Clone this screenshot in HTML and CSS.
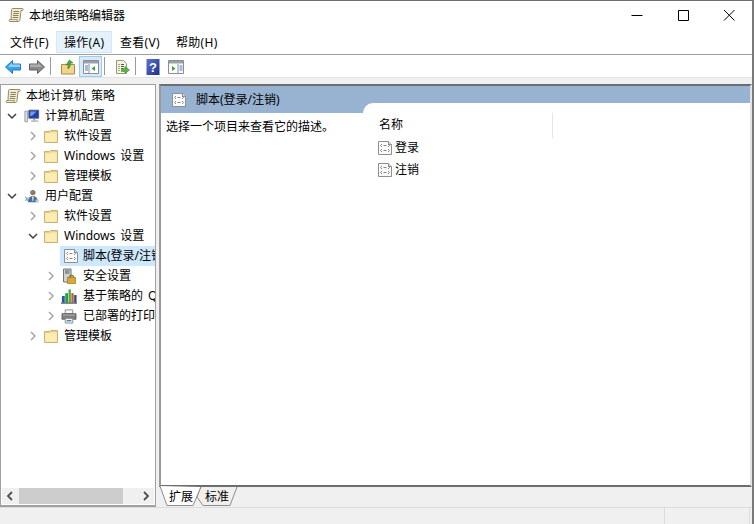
FILE: index.html
```html
<!DOCTYPE html>
<html lang="zh-CN">
<head>
<meta charset="utf-8">
<title>本地组策略编辑器</title>
<link rel="stylesheet" href="styles.css">
</head>
<body>
<svg class="defs" width="0" height="0" aria-hidden="true">
  <defs>
    <linearGradient id="help-fill" x1="0" y1="0" x2="1" y2="1">
      <stop offset="0" stop-color="#5b74cc"/>
      <stop offset="1" stop-color="#1f2f8c"/>
    </linearGradient>
    <symbol id="scroll" viewBox="0 0 16 16">
      <path d="M4.500 1.500H14.500C15.300 1.500 15.500 2.800 14.500 3.500H13L12 12.500C11.800 14 11 14.500 10 14.500H2C.8 14.500.8 12.800 2 12.500H3L3.500 3C3.500 2.200 4 1.500 4.500 1.500z" fill="#f4ebc8" stroke="#85805f" stroke-width=".9"/>
      <path d="M5.500 4.500h5.500M5.300 6.500h5.500M5 8.500h5.500M4.800 10.500h5.500" stroke="#7a745c" stroke-width=".9"/>
      <path d="M3 12.500h6.500c-.6.600-.6 1.400 0 2" fill="none" stroke="#85805f" stroke-width=".7"/>
    </symbol>
    <symbol id="folder" viewBox="0 0 16 16">
      <path d="M1.500 3.500V14.500H14.500V2.500H7.500L6.500 3.500z" fill="#f9e49b" stroke="#c9b27a"/>
      <path d="M2.500 5.500H13.500V13.500H2.500z" fill="#fcedb4"/>
      <path d="M2 4.500H7l1-1h6" fill="none" stroke="#e3cf8f"/>
    </symbol>
    <symbol id="script" viewBox="0 0 16 16">
      <path d="M1.500 1.500H11.500L14.500 4.500V14.500H1.500z" fill="#fbfbfb" stroke="#8f8f8f"/>
      <path d="M11.500 1.500V4.500H14.500" fill="#e4e4e4" stroke="#8f8f8f"/>
      <path d="M5 4L3.500 5.500 5 7M6.500 5.500h3M11 4l1.500 1.500L11 7M5 9L3.500 10.500 5 12M6.500 10.500h3M11 9l1.500 1.500L11 12" fill="none" stroke="#777" stroke-width=".9"/>
    </symbol>
    <symbol id="computer" viewBox="0 0 18 16">
      <path d="M1 2.500h3v12H1z" fill="#d9dde3" stroke="#7c8490" stroke-width=".8"/>
      <path d="M5.500 1.500h11v9h-11z" fill="#1f3fb0" stroke="#53596a"/>
      <path d="M7 3h7L9 8H7z" fill="#6f9bea"/>
      <path d="M8 13h8v1.500H8z" fill="#a9afb8"/>
      <path d="M10.500 10.500h2V13h-2z" fill="#8c93a0"/>
    </symbol>
    <symbol id="user" viewBox="0 0 18 16">
      <circle cx="10" cy="4.200" r="3" fill="#8b7a64"/>
      <path d="M4.500 15c0-4.500 2-7 5.500-7s5.500 2.500 5.500 7z" fill="#4c6f97"/>
      <path d="M9 8.500h2l-.5 5h-1z" fill="#d9e4ee"/>
      <path d="M1.500 8.500l3 5M1.500 13.500c1-2 2-3 3.500-4" stroke="#8aa3bb" stroke-width="1.200" fill="none"/>
      <path d="M13 12h3.500v3H13z" fill="#b8c8d6"/>
    </symbol>
    <symbol id="lock" viewBox="0 0 16 16">
      <path d="M2.500 1h7.500v13H2.500z" fill="#cfd3d6" stroke="#6d7378"/>
      <path d="M4 3h4.500M4 5h4.500" stroke="#4e5458"/>
      <path d="M8.300 9.500a2.200 2.200 0 0 1 4.400 0" fill="none" stroke="#8a6d1c" stroke-width="1.200"/>
      <path d="M6.500 9.500h8v6h-8z" fill="#d9aa2f" stroke="#96741a" stroke-width=".7"/>
    </symbol>
    <symbol id="chart" viewBox="0 0 17 16">
      <path d="M1 8h3v7H1z" fill="#2456b8"/>
      <path d="M4.500 5h3v10h-3z" fill="#2f9c3c"/>
      <path d="M8 1h2.500v14H8z" fill="#40b04a"/>
      <path d="M11 5h2.500v10H11z" fill="#d9541e"/>
      <path d="M14 7h2.500v8H14z" fill="#1f4aa8"/>
      <path d="M0 15h17v1H0z" fill="#222"/>
    </symbol>
    <symbol id="printer" viewBox="0 0 17 16">
      <path d="M4.500 1.500h8v4h-8z" fill="#fafafa" stroke="#8a8a8a"/>
      <path d="M1 5.500h15v6H1z" fill="#7d7f82" stroke="#55585c" stroke-width=".8"/>
      <path d="M2 7h13" stroke="#b5b7ba"/>
      <path d="M4.500 10.500h8v5h-8z" fill="#f2f6f8" stroke="#8a8a8a"/>
      <path d="M6 13h5" stroke="#3f87b5" stroke-width="1.500"/>
    </symbol>
    <symbol id="window-left" viewBox="0 0 16 16">
      <path d="M.5 1.500h15v13H.5z" fill="#fff" stroke="#8a8f96"/>
      <path d="M1 2h14v2.500H1z" fill="#9aa0a8"/>
      <path d="M6 5v9" stroke="#8a8f96"/>
      <path d="M2 7h3M2 9h3M2 11h3" stroke="#3f7fc1" stroke-width="1.200"/>
      <path d="M12 7v5L8.500 9.500z" fill="#3ca03c"/>
    </symbol>
    <symbol id="window-right" viewBox="0 0 16 16">
      <path d="M.5 1.500h15v13H.5z" fill="#fff" stroke="#8a8f96"/>
      <path d="M1 2h14v2.500H1z" fill="#9aa0a8"/>
      <path d="M10 5v9" stroke="#8a8f96"/>
      <path d="M11.500 7h3M11.500 9h3M11.500 11h3" stroke="#3f7fc1" stroke-width="1.200"/>
      <path d="M4 7v5L7.500 9.500z" fill="#3ca03c"/>
    </symbol>
  </defs>
</svg>

<div class="window">
  <header class="titlebar">
    <svg class="icon title-icon"><use href="#scroll"/></svg>
    <span class="title">本地组策略编辑器</span>
    <div class="controls">
      <svg class="control" viewBox="0 0 46 28"><path d="M17.500 14.500H28.500" stroke="#000"/></svg>
      <svg class="control" viewBox="0 0 46 28"><path d="M18.500 9.500h10v10h-10z" fill="none" stroke="#000"/></svg>
      <svg class="control" viewBox="0 0 46 28"><path d="M18 9l10.500 10.500M28.500 9L18 19.500" stroke="#000"/></svg>
    </div>
  </header>

  <nav class="menubar">
    <span class="menu menu-first">文件(F)</span>
    <span class="menu menu-active">操作(A)</span>
    <span class="menu">查看(V)</span>
    <span class="menu">帮助(H)</span>
  </nav>

  <div class="toolbar">
    <span class="tool tool-arrow">
      <svg class="tool-icon" viewBox="0 0 16 16"><path d="M.5 8L7.500 1.500V5H15.500V11H7.500V14.500z" fill="#36a5ec" stroke="#2b77b5"/><path d="M7 3.500V5.500H15V8H3z" fill="#8fd3fa"/></svg>
    </span>
    <span class="tool">
      <svg class="tool-icon" viewBox="0 0 16 16"><path d="M15.500 8L8.500 1.500V5H.5V11H8.500V14.500z" fill="#8a8a8a" stroke="#606060"/><path d="M1 5.500H9V3.500L13 8H1z" fill="#adadad"/></svg>
    </span>
    <span class="sep"></span>
    <span class="tool">
      <svg class="tool-icon" viewBox="0 0 16 16"><path d="M1.500 5.500V15H14.500V5.500H8z" fill="#f3d488" stroke="#a98c4e"/><path d="M8 10V5.500L6 6l3.500-5L13 4l-2-.3c-.5 2.800-1.500 5-3 6.300z" fill="#4caf3b" stroke="#2e7d25" stroke-width=".6"/></svg>
    </span>
    <span class="tool tool-on">
      <svg class="tool-icon"><use href="#window-left"/></svg>
    </span>
    <span class="sep"></span>
    <span class="tool">
      <svg class="tool-icon" viewBox="0 0 16 16"><path d="M2.500 1.500H9.500L12.500 4.500V14.500H2.500z" fill="#f7f3dc" stroke="#9a967f"/><path d="M4.500 5.500h1M7 5.500h3M4.500 7.500h1M7 7.500h3M4.500 9.500h1M7 9.500h2M4.500 11.500h1" stroke="#555"/><path d="M7.500 9.500h3.500V7.500l4.500 3.500-4.500 3.500v-2H7.500z" fill="#52b848" stroke="#3a8a30" stroke-width=".6"/></svg>
    </span>
    <span class="sep"></span>
    <span class="tool tool-help">
      <svg class="tool-icon" viewBox="0 0 16 16"><path d="M1.500 0h13v16h-13z" fill="url(#help-fill)"/><text class="help-mark" x="8" y="13">?</text></svg>
    </span>
    <span class="tool">
      <svg class="tool-icon"><use href="#window-right"/></svg>
    </span>
  </div>

  <main class="workspace">
    <aside class="tree-pane">
      <ul class="tree">
        <li class="row root"><span class="twist"></span><svg class="icon node-icon"><use href="#scroll"/></svg><span class="label">本地计算机 策略</span></li>
        <li class="row l1"><svg class="twist" viewBox="0 0 10 10"><path d="M1 3l4 4 4-4" class="open"/></svg><svg class="icon node-icon"><use href="#computer"/></svg><span class="label">计算机配置</span></li>
        <li class="row l2"><svg class="twist" viewBox="0 0 10 10"><path d="M3 1l4 4-4 4" class="closed"/></svg><svg class="icon node-icon"><use href="#folder"/></svg><span class="label">软件设置</span></li>
        <li class="row l2"><svg class="twist" viewBox="0 0 10 10"><path d="M3 1l4 4-4 4" class="closed"/></svg><svg class="icon node-icon"><use href="#folder"/></svg><span class="label">Windows 设置</span></li>
        <li class="row l2"><svg class="twist" viewBox="0 0 10 10"><path d="M3 1l4 4-4 4" class="closed"/></svg><svg class="icon node-icon"><use href="#folder"/></svg><span class="label">管理模板</span></li>
        <li class="row l1"><svg class="twist" viewBox="0 0 10 10"><path d="M1 3l4 4 4-4" class="open"/></svg><svg class="icon node-icon"><use href="#user"/></svg><span class="label">用户配置</span></li>
        <li class="row l2"><svg class="twist" viewBox="0 0 10 10"><path d="M3 1l4 4-4 4" class="closed"/></svg><svg class="icon node-icon"><use href="#folder"/></svg><span class="label">软件设置</span></li>
        <li class="row l2"><svg class="twist" viewBox="0 0 10 10"><path d="M1 3l4 4 4-4" class="open"/></svg><svg class="icon node-icon"><use href="#folder"/></svg><span class="label">Windows 设置</span></li>
        <li class="row l3 selected"><span class="twist"></span><svg class="icon node-icon"><use href="#script"/></svg><span class="label">脚本(登录/注销)</span></li>
        <li class="row l3"><svg class="twist" viewBox="0 0 10 10"><path d="M3 1l4 4-4 4" class="closed"/></svg><svg class="icon node-icon"><use href="#lock"/></svg><span class="label">安全设置</span></li>
        <li class="row l3"><svg class="twist" viewBox="0 0 10 10"><path d="M3 1l4 4-4 4" class="closed"/></svg><svg class="icon node-icon"><use href="#chart"/></svg><span class="label">基于策略的 QoS</span></li>
        <li class="row l3"><svg class="twist" viewBox="0 0 10 10"><path d="M3 1l4 4-4 4" class="closed"/></svg><svg class="icon node-icon"><use href="#printer"/></svg><span class="label">已部署的打印机</span></li>
        <li class="row l2"><svg class="twist" viewBox="0 0 10 10"><path d="M3 1l4 4-4 4" class="closed"/></svg><svg class="icon node-icon"><use href="#folder"/></svg><span class="label">管理模板</span></li>
      </ul>
      <div class="hscroll">
        <svg class="arrow" viewBox="0 0 17 16"><path d="M10 4L6 8l4 4"/></svg>
        <div class="track"><div class="thumb"></div></div>
        <svg class="arrow" viewBox="0 0 17 16"><path d="M7 4l4 4-4 4"/></svg>
      </div>
    </aside>

    <section class="content">
      <div class="detail-pane">
        <div class="banner">
          <svg class="icon banner-icon"><use href="#script"/></svg>
          <span class="label">脚本(登录/注销)</span>
        </div>
        <div class="detail-body">
          <p class="description">选择一个项目来查看它的描述。</p>
          <div class="list">
            <div class="list-head"><span class="col-name">名称</span></div>
            <div class="list-row"><svg class="icon item-icon"><use href="#script"/></svg><span class="label">登录</span></div>
            <div class="list-row"><svg class="icon item-icon"><use href="#script"/></svg><span class="label">注销</span></div>
          </div>
        </div>
      </div>
      <div class="tabs">
        <svg class="tabs-svg" viewBox="0 0 84 20" width="84" height="20">
          <path d="M1 -1L8 18.500H34L42 0" fill="#fff" stroke="#8c8c8c"/>
          <path d="M42 0L38 10L44 18.500H71L78 0" fill="#f0f0f0" stroke="#8c8c8c"/>
          <text class="tab-label" x="10" y="14">扩展</text>
          <text class="tab-label" x="46" y="14">标准</text>
        </svg>
      </div>
    </section>
  </main>

  <footer class="statusbar">
    <span class="status-cell status-main"></span>
    <span class="status-cell status-side"></span>
    <span class="status-cell status-end"></span>
  </footer>
</div>
</body>
</html>
```
FILE: styles.css
```css
* { box-sizing: border-box; }
html, body { margin: 0; padding: 0; height: 100%; overflow: hidden; }
body {
  font-family: "Noto Sans", "Noto Sans CJK SC", sans-serif;
  font-size: 12px;
  color: #000;
  background: #fff;
}
.defs { display: block; width: 0; height: 0; overflow: hidden; }
.icon { display: block; flex: none; width: 16px; height: 16px; }
.label { display: block; padding-bottom: 2px; }

.window {
  display: flex;
  flex-direction: column;
  width: 754px;
  height: 524px;
  border-top: 1px solid #6d6d6d;
  border-right: 2px solid #7a7a7a;
  background: #fff;
}

.titlebar { display: flex; align-items: center; height: 28px; flex: none; padding-left: 8px; }
.title { margin-left: 5px; line-height: 30px; height: 28px; flex: 1; }
.controls { display: flex; }
.control { display: block; width: 46px; height: 28px; }

.menubar {
  display: flex;
  height: 26px;
  flex: none;
  padding: 2px 0 0 1px;
  border-bottom: 1px solid #a0a0a0;
}
.menu { display: block; width: 56px; height: 22px; line-height: 22px; padding-left: 7px; border: 1px solid transparent; letter-spacing: .3px; white-space: nowrap; }
.menu-first { padding-left: 8px; width: 55px; }
.menu-active { background: #e6f2fb; border-color: #d3e9fa; }

.toolbar { display: flex; align-items: center; height: 22px; flex: none; padding-left: 1px; }
.tool { display: flex; align-items: center; justify-content: center; width: 23px; height: 21px; padding-top: 1px; border: 1px solid transparent; }
.tool-arrow { width: 24px; }
.tool-on { background: #d6eafa; border-color: #9fcdf0; }
.tool-icon { display: block; width: 16px; height: 16px; }
.sep { width: 1px; height: 18px; margin: 0 5px 0 2px; background: #9a9a9a; }
.help-mark { font: bold 13px "Liberation Sans", sans-serif; fill: #fff; text-anchor: middle; }

.workspace {
  display: flex;
  flex: 1;
  min-height: 0;
  padding-top: 6px;
  background: #f0f0f0;
  border-top: 1px solid #e3e3e3;
  column-gap: 3px;
}

.tree-pane {
  display: flex;
  flex-direction: column;
  width: 156px;
  flex: none;
  background: #fff;
  border: 1px solid #a0a0a0;
  border-bottom-width: 2px;
  overflow: hidden;
}
.tree { list-style: none; margin: 0; padding: 1px 0 0 1px; flex: 1; min-height: 0; overflow: hidden; }
.row { display: flex; align-items: center; height: 20px; white-space: nowrap; overflow: hidden; }
.row .label { margin-left: 5px; word-spacing: 2px; }
.row .twist { display: block; flex: none; width: 10px; height: 10px; }
.row > span.twist { width: 3px; margin: 0; }
.l1 { padding-left: 5px; }
.l1 .node-icon { margin-left: 7px; }
.l2 { padding-left: 26px; }
.l2 .node-icon { margin-left: 5px; }
.l3 { padding-left: 44px; }
.l3 .node-icon { margin-left: 5px; }
.l3 .label { margin-left: 6px; }
.selected { background: #cde8ff; margin-left: 58px; padding-left: 0; }
.selected > span.twist { display: none; }
.selected .node-icon { margin-left: 3px; }
.selected .label { margin-left: 4px; }
.open, .closed { fill: none; stroke-width: 1.500; }
.open { stroke: #404040; }
.closed { stroke: #a6a6a6; }

.hscroll { display: flex; align-items: center; height: 16px; flex: none; background: #f0f0f0; margin: 0 1px 1px 1px; }
.arrow { display: block; flex: none; width: 17px; height: 16px; }
.arrow path { fill: none; stroke: #505050; stroke-width: 1.800; }
.track { flex: 1; height: 100%; }
.thumb { width: 104px; height: 100%; background: #cdcdcd; }

.content { display: flex; flex-direction: column; flex: 1; min-width: 0; }
.detail-pane {
  display: flex;
  flex-direction: column;
  flex: 1;
  min-height: 0;
  background: #fff;
  border-top: 2px solid #6d6d6d;
  border-left: 2px solid #9a9a9a;
  border-bottom: 2px solid #6d6d6d;
  border-right: 2px solid #e3e3e3;
}
.banner {
  display: flex;
  align-items: center;
  height: 27px;
  flex: none;
  padding-left: 10px;
  background: #98b3d1;
  column-gap: 9px;
}
.detail-body { display: flex; flex: 1; min-height: 0; }
.description { margin: 0; width: 202px; flex: none; padding: 5px 0 0 5px; line-height: 17px; }
.list {
  position: relative;
  flex: 1;
  margin-top: -10px;
  background: #fff;
  border-top-left-radius: 10px;
  padding-top: 10px;
}
.list-head { display: flex; align-items: center; height: 25px; margin-bottom: -1px; padding-left: 16px; }
.col-name { display: block; width: 174px; height: 25px; line-height: 23px; border-right: 1px solid #e5e5e5; }
.list-row { display: flex; align-items: center; height: 22px; padding-left: 14px; column-gap: 2px; }

.tabs { height: 20px; flex: none; }
.tabs-svg { display: block; overflow: visible; }
.tab-label { font-size: 12px; fill: #000; font-family: "Noto Sans CJK SC", sans-serif; }

.statusbar { display: flex; height: 17px; flex: none; background: #f0f0f0; border-top: 1px solid #dcdcdc; }
.status-cell { display: block; height: 100%; }
.status-main { flex: 1; }
.status-side { width: 85px; border-left: 1px solid #dcdcdc; }
.status-end { width: 3px; border-left: 1px solid #dcdcdc; }
```
